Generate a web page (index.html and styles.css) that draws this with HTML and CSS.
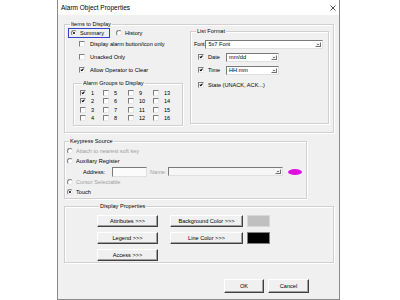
FILE: index.html
```html
<html>
<head>
    <title>Alarm Object Properties</title>
    <link rel="stylesheet" href="styles.css">
</head>
<body>
    <div class="dialog">
        <div class="titlebar">
            <span>Alarm Object Properties</span>
            <svg class="close" width="6" height="6" viewBox="0 0 6 6"><path d="M0.5 0.5L5.5 5.5M5.5 0.5L0.5 5.5" stroke="#222" stroke-width="0.8"/></svg>
        </div>

        <div class="content">
            <fieldset class="group items">
                <legend>Items to Display</legend>
                <div class="items-cols">
                    <div class="items-left">
                        <div class="radio-row">
                            <span class="focus"><span class="radio checked"></span>Summary</span>
                            <span class="opt history"><span class="radio"></span>History</span>
                        </div>
                        <div class="check-row"><span class="box"></span>Display alarm button/icon only</div>
                        <div class="check-row"><span class="box"></span>Unacked Only</div>
                        <div class="check-row"><span class="box checked"></span>Allow Operator to Clear</div>

                        <fieldset class="group alarm-groups">
                            <legend>Alarm Groups to Display</legend>
                            <div class="grid">
                                <div class="cell"><span class="box checked"></span>1</div>
                                <div class="cell"><span class="box checked"></span>2</div>
                                <div class="cell"><span class="box"></span>3</div>
                                <div class="cell"><span class="box"></span>4</div>
                                <div class="cell"><span class="box"></span>5</div>
                                <div class="cell"><span class="box"></span>6</div>
                                <div class="cell"><span class="box"></span>7</div>
                                <div class="cell"><span class="box"></span>8</div>
                                <div class="cell"><span class="box"></span>9</div>
                                <div class="cell"><span class="box"></span>10</div>
                                <div class="cell"><span class="box"></span>11</div>
                                <div class="cell"><span class="box"></span>12</div>
                                <div class="cell"><span class="box"></span>13</div>
                                <div class="cell"><span class="box"></span>14</div>
                                <div class="cell"><span class="box"></span>15</div>
                                <div class="cell"><span class="box"></span>16</div>
                            </div>
                        </fieldset>
                    </div>

                    <fieldset class="group list">
                        <legend>List Format</legend>
                        <div class="fl-row font-row">
                            <span class="font-label">Font</span>
                            <div class="combo font-combo"><span class="value">5x7 Font</span><span class="arrow"></span></div>
                        </div>
                        <div class="fl-row fmt-row">
                            <span class="box checked"></span><span class="fmt-label">Date</span>
                            <div class="combo small-combo"><span class="value">mm/dd</span><span class="arrow"></span></div>
                        </div>
                        <div class="fl-row fmt-row">
                            <span class="box checked"></span><span class="fmt-label">Time</span>
                            <div class="combo small-combo"><span class="value">HH:mm</span><span class="arrow"></span></div>
                        </div>
                        <div class="fl-row state-row">
                            <span class="box checked"></span><span>State (UNACK, ACK...)</span>
                        </div>
                    </fieldset>
                </div>
            </fieldset>

            <fieldset class="group keypress">
                <legend>Keypress Source</legend>
                <div class="opt-row disabled"><span class="radio"></span>Attach to nearest soft key</div>
                <div class="opt-row"><span class="radio"></span>Auxiliary Register</div>
                <div class="addr-row">
                    <span class="addr-label">Address:</span>
                    <span class="input"></span>
                    <span class="name-label disabled">Name:</span>
                    <div class="combo name-combo"><span class="value"></span><span class="arrow"></span></div>
                    <span class="tag"></span>
                </div>
                <div class="opt-row disabled"><span class="radio"></span>Cursor Selectable</div>
                <div class="opt-row"><span class="radio checked"></span>Touch</div>
            </fieldset>

            <fieldset class="group display">
                <legend>Display Properties</legend>
                <div class="btn-grid">
                    <button class="btn col1">Attributes &gt;&gt;&gt;</button>
                    <button class="btn col2">Background Color &gt;&gt;&gt;</button>
                    <span class="swatch gray"></span>
                    <button class="btn col1">Legend &gt;&gt;&gt;</button>
                    <button class="btn col2">Line Color &gt;&gt;&gt;</button>
                    <span class="swatch black"></span>
                    <button class="btn col1">Access &gt;&gt;&gt;</button>
                </div>
            </fieldset>

            <div class="footer">
                <button class="btn ok">OK</button>
                <button class="btn cancel">Cancel</button>
            </div>
        </div>
    </div>
</body>
</html>
```

FILE: styles.css
```css
body {
    margin: 0;
    background: #fff;
    font-family: "Liberation Sans", Arial, sans-serif;
    font-size: 5.6px;
    color: #000;
}

.dialog {
    margin-left: 57px;
    width: 283px;
    height: 300px;
    box-sizing: border-box;
    border: 1px solid #8a8a8a;
    border-top: none;
    background: #f0f0f0;
    display: flex;
    flex-direction: column;
}

.titlebar {
    height: 15px;
    background: #fff;
    display: flex;
    align-items: center;
    justify-content: space-between;
    padding: 0 3px 0 3px;
    font-size: 6.5px;
}

.content {
    padding: 5.5px 5px 0 6px;
    display: flex;
    flex-direction: column;
}

fieldset.group {
    margin: 0;
    min-width: 0;
    border: 1px solid #d0d0d0;
    box-shadow: inset 1px 1px 0 #fff, 1px 1px 0 #fff;
}

fieldset.group legend {
    padding: 0 1px;
    margin-left: 2px;
    line-height: 7px;
}

/* checkbox and radio glyphs */
.box {
    display: inline-block;
    width: 4px;
    height: 4px;
    border: 1px solid;
    border-color: #808080 #e8e8e8 #e8e8e8 #808080;
    background: #fff;
    position: relative;
    flex-shrink: 0;
}

.box.checked::after {
    content: "";
    position: absolute;
    left: 1px;
    top: 0;
    width: 1.2px;
    height: 2.4px;
    border: solid #000;
    border-width: 0 1px 1px 0;
    transform: rotate(40deg);
}

.radio {
    display: inline-block;
    width: 4px;
    height: 4px;
    border: 1px solid;
    border-color: #808080 #e8e8e8 #e8e8e8 #808080;
    border-radius: 50%;
    background: #fff;
    position: relative;
    flex-shrink: 0;
}

.radio.checked::after {
    content: "";
    position: absolute;
    left: 1px;
    top: 1px;
    width: 2px;
    height: 2px;
    border-radius: 50%;
    background: #000;
}

.disabled {
    color: #a0a0a0;
}

/* items to display */
.items {
    padding: 0 4px 6px 3px;
}

.items-cols {
    display: flex;
    align-items: flex-start;
}

.items-left {
    width: 122px;
    display: flex;
    flex-direction: column;
}

.radio-row {
    height: 10px;
    display: flex;
    align-items: center;
}

.focus {
    height: 10px;
    width: 42px;
    box-sizing: border-box;
    border: 1px solid #3044c4;
    display: flex;
    align-items: center;
    gap: 3px;
    padding-left: 2px;
}

.opt {
    display: flex;
    align-items: center;
    gap: 3px;
}

.history {
    margin-left: 6px;
}

.check-row {
    height: 13px;
    display: flex;
    align-items: center;
    gap: 5px;
    padding-left: 11px;
}

.alarm-groups {
    margin-top: 3px !important;
    margin-left: 5px !important;
    width: 110px;
    box-sizing: border-box;
    padding: 2.5px 0 2.8px 6px;
}

.grid {
    display: grid;
    grid-template-columns: 23px 25px 25px 25px;
    grid-template-rows: repeat(4, 8.3px);
    grid-auto-flow: column;
}

.cell {
    display: flex;
    align-items: center;
    gap: 5px;
}

.list {
    flex: 1;
    padding: 0 5px 33px 3px;
}

.fl-row {
    height: 9px;
    display: flex;
    align-items: center;
}

.font-row {
    margin-top: 5px;
}

.font-label {
    margin-right: 1px;
    letter-spacing: -0.2px;
}

.fmt-row {
    margin-top: 4px;
    padding-left: 4px;
}

.fmt-row .box,
.state-row .box {
    margin-right: 4px;
}

.fmt-label {
    width: 18px;
}

.state-row {
    margin-top: 6px;
    padding-left: 4px;
}

/* combo boxes */
.combo {
    height: 9px;
    box-sizing: border-box;
    border: 1px solid;
    border-color: #7a7a7a #e0e0e0 #e0e0e0 #7a7a7a;
    background: #fff;
    display: flex;
    align-items: center;
}

.combo .value {
    flex: 1;
    padding-left: 2px;
}

.combo .arrow {
    width: 6px;
    height: 5px;
    margin-right: 1px;
    box-sizing: border-box;
    border: 1px solid;
    border-color: #fff #707070 #707070 #fff;
    background: #f0f0f0;
    display: flex;
    align-items: center;
    justify-content: center;
}

.combo .arrow::after {
    content: "";
    border: 1px solid transparent;
    border-top: 1.2px solid #000;
    border-bottom: none;
}

.font-combo {
    flex: 1;
}

.small-combo {
    width: 53px;
}

.name-combo {
    width: 115px;
    background: #f6f6f6;
}

/* keypress source */
.keypress {
    margin-top: 5.5px !important;
    width: 243px;
    box-sizing: border-box;
    padding: 1px 2px 1px 2px;
}

.opt-row {
    height: 10px;
    display: flex;
    align-items: center;
    gap: 3px;
}

.addr-row {
    height: 11px;
    display: flex;
    align-items: center;
    padding-left: 16px;
}

.addr-label {
    width: 29px;
}

.input {
    width: 35px;
    height: 10px;
    box-sizing: border-box;
    border: 1px solid;
    border-color: #7a7a7a #e0e0e0 #e0e0e0 #7a7a7a;
    background: #fbfbfb;
}

.name-label {
    margin-left: 3px;
    width: 18px;
}

.tag {
    width: 14px;
    height: 6px;
    margin-left: 5px;
    border-radius: 50%;
    background: #e010e0;
}

/* display properties */
.display {
    margin-top: 4px !important;
    padding: 4.5px 0 1px 32px;
}

.btn-grid {
    display: grid;
    grid-template-columns: 61px 85px 27px;
    grid-auto-rows: 12px;
    row-gap: 5px;
}

.btn {
    margin: 0;
    padding: 0;
    font-family: inherit;
    font-size: 5.6px;
    color: #000;
    background: #f0f0f0;
    border: 1px solid;
    border-color: #fff #404040 #404040 #fff;
    box-shadow: inset -1px -1px 0 #a0a0a0;
}

.col1 {
    width: 61px;
}

.col2 {
    width: 73px;
    justify-self: end;
}

.swatch {
    width: 23px;
    height: 12px;
    box-sizing: border-box;
    justify-self: end;
    border: 1px solid #d8d8d8;
}

.swatch.gray {
    background: #c0c0c0;
}

.swatch.black {
    background: #000;
    border-color: #808080;
}

.footer {
    margin-top: 16px;
    padding-right: 25px;
    display: flex;
    justify-content: flex-end;
    gap: 4px;
}

.ok {
    width: 40px;
    height: 14px;
}

.cancel {
    width: 41px;
    height: 14px;
}
```
